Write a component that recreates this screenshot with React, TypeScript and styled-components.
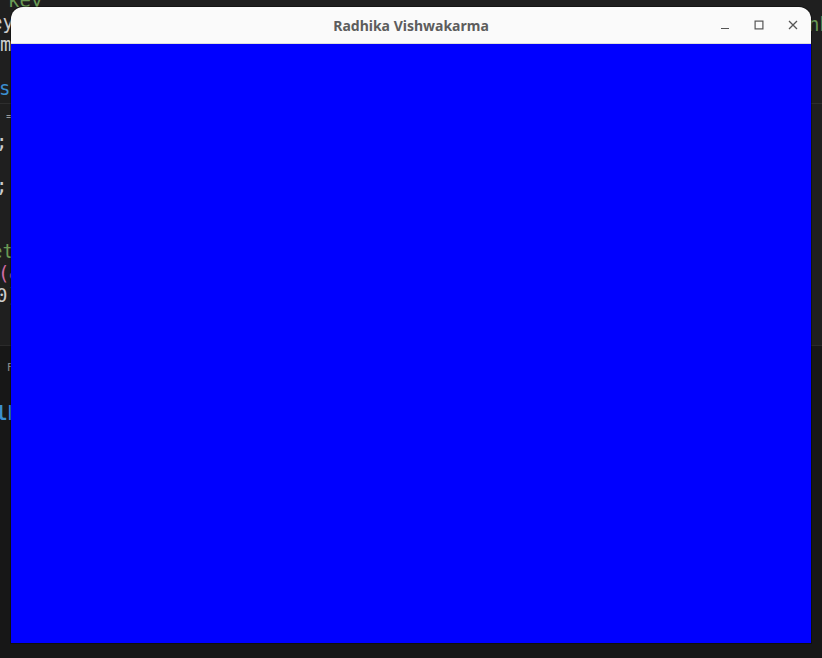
import React from "react";
import styled, { createGlobalStyle } from "styled-components";

const Global = createGlobalStyle`
  html, body { margin: 0; padding: 0; }
  body {
    background: #1c1c1c;
    width: 822px;
    height: 658px;
    overflow: hidden;
  }
`;

const lines = [
  { text: "key", color: "#6a9955", indent: 8 },
  { text: "ey", color: "#cccccc", indent: -9 },
  { text: "m", color: "#cccccc", indent: 0 },
  { text: "", color: "#cccccc", indent: 0 },
  { text: "sc", color: "#3b8fd0", indent: -1 },
];

const codeLines = [
  { text: ";", color: "#cccccc", indent: -4 },
  { text: "", color: "#cccccc", indent: 0 },
  { text: ";", color: "#cccccc", indent: -4 },
  { text: "", color: "#cccccc", indent: 0 },
  { text: "", color: "#cccccc", indent: 0 },
  { text: "et", color: "#6a9955", indent: -9 },
  { text: "(&", color: "#d16ba5", indent: -2 },
  { text: "0)", color: "#cccccc", indent: -4 },
];

export default function App() {
  return (
    <>
      <Global />
      <Desktop>
        <Editor>
          <Pane $top={-11}>
            {lines.map((l, i) => (
              <Line key={i} $color={l.color} $indent={l.indent}>
                {l.text}
              </Line>
            ))}
          </Pane>
          <Divider />
          <TabRow>=</TabRow>
          <Pane $top={0}>
            {codeLines.map((l, i) => (
              <Line key={i} $color={l.color} $indent={l.indent}>
                {l.text}
              </Line>
            ))}
          </Pane>
        </Editor>
        <Panel>
          <PanelLabel>F</PanelLabel>
          <PanelText>lh</PanelText>
        </Panel>
        <RightCode>nb</RightCode>

        <Window>
          <TitleBar>
            <Title>Radhika Vishwakarma</Title>
            <Controls>
              <CtrlButton aria-label="minimize">
                <svg width="10" height="10" viewBox="0 0 10 10">
                  <path d="M1 8.5h8" stroke="#555" strokeWidth="1.2" />
                </svg>
              </CtrlButton>
              <CtrlButton aria-label="maximize">
                <svg width="10" height="10" viewBox="0 0 10 10">
                  <rect x="1.1" y="1.1" width="7.8" height="7.8" fill="none" stroke="#555" strokeWidth="1.2" />
                </svg>
              </CtrlButton>
              <CtrlButton aria-label="close">
                <svg width="10" height="10" viewBox="0 0 10 10">
                  <path d="M1 1l8 8M9 1l-8 8" stroke="#555" strokeWidth="1.3" />
                </svg>
              </CtrlButton>
            </Controls>
          </TitleBar>
          <Canvas />
        </Window>
      </Desktop>
    </>
  );
}

const Desktop = styled.div`
  position: relative;
  width: 822px;
  height: 658px;
  background: #171717;
  overflow: hidden;
  font-family: "DejaVu Sans Mono", "Liberation Mono", monospace;
`;

const Editor = styled.div`
  background: #1f1f1f;
  height: 345px;
  display: flex;
  flex-direction: column;
  border-bottom: 1px solid #2b2b2b;
`;

const Pane = styled.div<{ $top: number }>`
  display: flex;
  flex-direction: column;
  margin-top: ${(p) => p.$top}px;
`;

const Line = styled.div<{ $color: string; $indent: number }>`
  height: 22px;
  line-height: 22px;
  font-size: 19px;
  color: ${(p) => p.$color};
  padding-left: ${(p) => Math.max(p.$indent, 0)}px;
  margin-left: ${(p) => Math.min(p.$indent, 0)}px;
  white-space: pre;
`;

const Divider = styled.div`
  height: 1px;
  margin-top: 4px;
  background: #2e2e2e;
`;

const TabRow = styled.div`
  height: 24px;
  line-height: 24px;
  font-size: 12px;
  color: #9a9a9a;
  padding-left: 6px;
  margin-bottom: 2px;
`;

const Panel = styled.div`
  display: flex;
  flex-direction: column;
  padding-top: 15px;
  gap: 28px;
`;

const PanelLabel = styled.div`
  font-family: "DejaVu Sans", sans-serif;
  font-size: 11px;
  color: #8a8a8a;
  padding-left: 7px;
`;

const PanelText = styled.div`
  font-size: 19px;
  font-weight: 700;
  color: #3b8fd0;
  margin-left: -4px;
`;

const RightCode = styled.div`
  position: absolute;
  top: 13px;
  left: 808px;
  font-size: 19px;
  line-height: 22px;
  color: #6a9955;
`;

const Window = styled.div`
  position: absolute;
  left: 11px;
  top: 7px;
  width: 800px;
  height: 636px;
  display: flex;
  flex-direction: column;
  border-radius: 12px 12px 0 0;
  overflow: hidden;
  box-shadow: 0 0 0 1px rgba(0, 0, 0, 0.35);
`;

const TitleBar = styled.div`
  position: relative;
  height: 36px;
  flex: none;
  background: #fafafa;
  border-bottom: 1px solid #dcdcdc;
  display: flex;
  align-items: center;
  justify-content: center;
`;

const Title = styled.div`
  font-family: "Noto Sans", "DejaVu Sans", sans-serif;
  font-weight: 700;
  font-size: 14px;
  color: #5d5d5d;
`;

const Controls = styled.div`
  position: absolute;
  right: 8px;
  top: 0;
  bottom: 0;
  display: flex;
  align-items: center;
  gap: 14px;
`;

const CtrlButton = styled.div`
  width: 20px;
  height: 20px;
  display: flex;
  align-items: center;
  justify-content: center;
`;

const Canvas = styled.div`
  flex: 1;
  background: #0000ff;
`;
